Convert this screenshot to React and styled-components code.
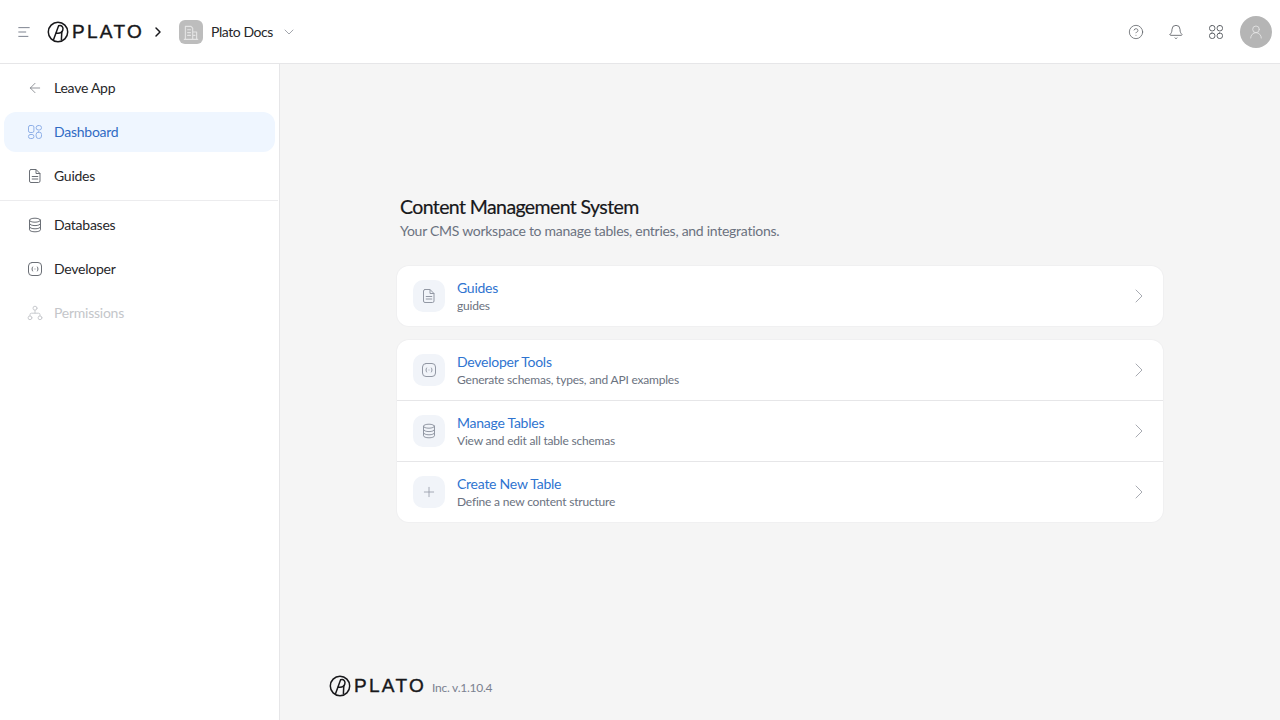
import React from "react";
import styled, { createGlobalStyle } from "styled-components";
import { ChevronDown, ChevronRight, ArrowLeft, CircleHelp, Bell, Plus, UserRound } from "lucide-react";

const GlobalStyle = createGlobalStyle`
  html, body {
    margin: 0;
    padding: 0;
    height: 100%;
    overflow: hidden;
    font-family: Lato, "Liberation Sans", sans-serif;
    letter-spacing: -0.25px;
    background: #f5f5f5;
  }
  * {
    box-sizing: border-box;
  }
`;

const Page = styled.div`
  display: flex;
  flex-direction: column;
  width: 1280px;
  height: 720px;
`;
const Header = styled.header`
  display: flex;
  align-items: center;
  flex: 0 0 64px;
  padding: 0 4px 0 17px;
  background: #ffffff;
  border-bottom: 1px solid #e6e6e8;
`;
const MenuButton = styled.span`
  display: flex;
  width: 16px;
  margin-right: 14px;
  color: #6b7280;
`;
const Caret = styled.span`
  display: flex;
  margin: 0 13px 0 6px;
  color: #18181b;
`;
const WorkspaceIcon = styled.span`
  display: flex;
  align-items: center;
  justify-content: center;
  width: 24px;
  height: 24px;
  border-radius: 6px;
  background: #bdbdbd;
  color: #e4e4e4;
`;
const WorkspaceName = styled.span`
  margin: 0 8px 0 8px;
  font-size: 14px;
  letter-spacing: -0.45px;
  color: #27272a;
`;
const DownIcon = styled.span`
  display: flex;
  color: #8b8f98;
`;
const HeaderRight = styled.div`
  display: flex;
  align-items: center;
  gap: 8px;
  margin-left: auto;
  margin-right: 4px;
`;
const HeaderButton = styled.span`
  display: flex;
  align-items: center;
  justify-content: center;
  width: 32px;
  height: 32px;
  color: #5f6368;
`;
const Avatar = styled.span`
  display: flex;
  align-items: center;
  justify-content: center;
  width: 32px;
  height: 32px;
  border-radius: 50%;
  background: #b5b5b5;
  color: #e8e8e8;
`;
const Body = styled.div`
  display: flex;
  flex: 1;
  min-height: 0;
`;
const Sidebar = styled.nav`
  display: flex;
  flex-direction: column;
  flex: 0 0 280px;
  padding: 4px 4px 0 4px;
  background: #ffffff;
  border-right: 1px solid #e6e6e8;
`;
const NavGroup = styled.div`
  display: flex;
  flex-direction: column;
  gap: 4px;
`;
const NavDivider = styled.div`
  height: 1px;
  margin: 4px -3px 4px -4px;
  background: #ececee;
`;
const NavItem = styled.a`
  display: flex;
  align-items: center;
  gap: 11px;
  height: 40px;
  padding-left: 23px;
  border-radius: 12px;
  font-size: 14px;
  color: ${props => (props.$active ? "#2f6bc4" : props.$disabled ? "#c4c6ca" : "#27272a")};
  background: ${props => (props.$active ? "#eff6ff" : "transparent")};
  svg {
    color: ${props => (props.$active ? "#8fb0e8" : props.$disabled ? "#c9cbcf" : "#6b6f76")};
  }
`;
const NavLabel = styled.span`
  padding-bottom: 2px;
`;
const Main = styled.main`
  display: flex;
  flex-direction: column;
  flex: 1;
  padding-top: 129px;
  background: #f5f5f5;
`;
const Content = styled.div`
  display: flex;
  flex-direction: column;
  width: 766px;
  margin: 0 auto;
`;
const Title = styled.h1`
  margin: 0 0 0 3px;
  font-size: 19.5px;
  font-weight: 400;
  line-height: 28px;
  letter-spacing: -0.6px;
  color: #18181b;
  -webkit-text-stroke: 0.2px #18181b;
`;
const Subtitle = styled.p`
  margin: 0 0 25px 3px;
  font-size: 14px;
  line-height: 20px;
  letter-spacing: -0.27px;
  color: #6b7280;
`;
const Card = styled.section`
  display: flex;
  flex-direction: column;
  margin-bottom: 14px;
  border-radius: 12px;
  background: #ffffff;
  box-shadow: 0 0 0 1px #f0f0f1;
`;
const Row = styled.a`
  display: flex;
  align-items: center;
  gap: 12px;
  height: 61px;
  padding: 0 16px;
  border-top: 1px solid #e6e6e8;
  &:first-child {
    height: 60px;
    border-top: none;
  }
`;
const RowIcon = styled.span`
  display: flex;
  align-items: center;
  justify-content: center;
  flex: 0 0 32px;
  height: 32px;
  border-radius: 10px;
  background: #f1f4f9;
  color: #9298a4;
`;
const RowText = styled.div`
  display: flex;
  flex-direction: column;
  flex: 1;
`;
const RowTitle = styled.span`
  font-size: 14px;
  line-height: 20px;
  color: #2f74d0;
`;
const RowDesc = styled.span`
  font-size: 12px;
  line-height: 16px;
  letter-spacing: -0.2px;
  color: #6b7280;
`;
const RowArrow = styled.span`
  display: flex;
  justify-content: center;
  width: 16px;
  color: #a8abb2;
  svg {
    flex: none;
  }
`;
const Footer = styled.footer`
  display: flex;
  align-items: center;
  gap: 6px;
  margin-top: auto;
  padding: 0 0 23px 49px;
`;
const FooterText = styled.span`
  margin-top: 2px;
  font-size: 12px;
  color: #7b8190;
`;
const Brand = styled.span`
  display: flex;
  align-items: center;
  gap: 3px;
`;
const Wordmark = styled.span`
  font-family: "Liberation Sans", sans-serif;
  font-size: 19px;
  line-height: 22px;
  font-weight: 400;
  letter-spacing: 2.3px;
  color: #18181b;
  -webkit-text-stroke: 0.4px #18181b;
`;

const Icon = ({ size = 16, children, width = 1 }) => (
  <svg width={size} height={size} viewBox="0 0 16 16" fill="none" stroke="currentColor" strokeWidth={width} strokeLinecap="round" strokeLinejoin="round">
    {children}
  </svg>
);
const MenuIcon = () => (
  <Icon size={14}>
    <path d="M2 3h12M2 8h8M2 13h10.5" />
  </Icon>
);
const GridIcon = ({ size }) => (
  <Icon size={size}>
    <rect x="1.5" y="1.5" width="5.4" height="5.4" rx="2.4" />
    <rect x="9.1" y="1.5" width="5.4" height="5.4" rx="2.4" />
    <rect x="1.5" y="9.1" width="5.4" height="5.4" rx="2.4" />
    <rect x="9.1" y="9.1" width="5.4" height="5.4" rx="2.4" />
  </Icon>
);
const DashIcon = () => (
  <Icon>
    <rect x="1.5" y="1.5" width="5.4" height="7" rx="1.6" />
    <rect x="9.1" y="1.5" width="5.4" height="4.5" rx="2.2" />
    <rect x="1.5" y="10.5" width="5.4" height="4" rx="1.8" />
    <rect x="9.1" y="8" width="5.4" height="6.5" rx="2.5" />
  </Icon>
);
const DocIcon = () => (
  <Icon>
    <path d="M4 1.5h5l4 4v7.5a1.5 1.5 0 0 1-1.5 1.5h-7.5a1.5 1.5 0 0 1-1.5-1.5v-10a1.5 1.5 0 0 1 1.5-1.5z" />
    <path d="M9 1.7v3.8h3.8M5.2 8.5h5.6M5.2 11h5.6" />
  </Icon>
);
const DatabaseIcon = () => (
  <Icon>
    <ellipse cx="8" cy="3.2" rx="5.5" ry="2" />
    <path d="M2.5 3.2v9.6c0 1.1 2.5 2 5.5 2s5.5-.9 5.5-2v-9.6" />
    <path d="M2.5 6.6c0 1.1 2.5 2 5.5 2s5.5-.9 5.5-2M2.5 9.8c0 1.1 2.5 2 5.5 2s5.5-.9 5.5-2" />
  </Icon>
);
const CodeIcon = () => (
  <Icon>
    <rect x="1.5" y="1.5" width="13" height="13" rx="3.5" />
    <path d="M5.6 6c-.8 1.2-.8 2.8 0 4M10.4 6c.8 1.2.8 2.8 0 4" />
    <path d="M8 8h.01" />
  </Icon>
);
const OrgIcon = () => (
  <Icon>
    <circle cx="8" cy="3.2" r="2" />
    <circle cx="3" cy="12.8" r="1.9" />
    <circle cx="13" cy="12.8" r="1.9" />
    <path d="M8 5.2v3M3 10.9v-1.2a1.5 1.5 0 0 1 1.5-1.5h7a1.5 1.5 0 0 1 1.5 1.5v1.2" />
  </Icon>
);
const BuildingIcon = () => (
  <Icon size={18}>
    <path d="M3 14.5v-11.5h5l1.5 1.5v10M9.5 8h3.5v6.5M2 14.5h12M5 6h2.5M5 8.5h2.5M5 11h2.5M10.5 11h1" />
  </Icon>
);
const LogoMark = () => (
  <svg width="22" height="22" viewBox="0 0 22 22" fill="none" stroke="#18181b" strokeWidth="1.5" strokeLinecap="round">
    <circle cx="11" cy="11" r="9.7" />
    <path d="M6.6 18.4 L11.6 4.8 C14.8 3.6 16.6 6.4 15.8 9 C15 11.6 12 12.6 8.8 12" />
    <path d="M14.8 10.8 L14.4 18.6" />
  </svg>
);
const Logo = () => (
  <Brand>
    <LogoMark />
    <Wordmark>PLATO</Wordmark>
  </Brand>
);

const GUIDE_ROWS = [{ icon: <DocIcon />, title: "Guides", desc: "guides" }];
const TOOL_ROWS = [
  { icon: <CodeIcon />, title: "Developer Tools", desc: "Generate schemas, types, and API examples" },
  { icon: <DatabaseIcon />, title: "Manage Tables", desc: "View and edit all table schemas" },
  { icon: <Plus size={16} strokeWidth={1.2} />, title: "Create New Table", desc: "Define a new content structure" }
];

const Rows = ({ rows }) => (
  <Card>
    {rows.map(row => (
      <Row key={row.title}>
        <RowIcon>{row.icon}</RowIcon>
        <RowText>
          <RowTitle>{row.title}</RowTitle>
          <RowDesc>{row.desc}</RowDesc>
        </RowText>
        <RowArrow>
          <ChevronRight size={24} strokeWidth={1} />
        </RowArrow>
      </Row>
    ))}
  </Card>
);

export default function App() {
  return (
    <Page>
      <GlobalStyle />
      <Header>
        <MenuButton>
          <MenuIcon />
        </MenuButton>
        <Logo />
        <Caret>
          <ChevronRight size={16} strokeWidth={2.2} />
        </Caret>
        <WorkspaceIcon>
          <BuildingIcon />
        </WorkspaceIcon>
        <WorkspaceName>Plato Docs</WorkspaceName>
        <DownIcon>
          <ChevronDown size={16} strokeWidth={1.2} />
        </DownIcon>
        <HeaderRight>
          <HeaderButton>
            <CircleHelp size={16} strokeWidth={1.2} />
          </HeaderButton>
          <HeaderButton>
            <Bell size={16} strokeWidth={1.3} />
          </HeaderButton>
          <HeaderButton>
            <GridIcon size={16} />
          </HeaderButton>
          <Avatar>
            <UserRound size={16} strokeWidth={1.2} />
          </Avatar>
        </HeaderRight>
      </Header>
      <Body>
        <Sidebar>
          <NavGroup>
            <NavItem>
              <ArrowLeft size={16} strokeWidth={1.1} />
              <NavLabel>Leave App</NavLabel>
            </NavItem>
            <NavItem $active>
              <DashIcon />
              <NavLabel>Dashboard</NavLabel>
            </NavItem>
            <NavItem>
              <DocIcon />
              <NavLabel>Guides</NavLabel>
            </NavItem>
          </NavGroup>
          <NavDivider />
          <NavGroup>
            <NavItem>
              <DatabaseIcon />
              <NavLabel>Databases</NavLabel>
            </NavItem>
            <NavItem>
              <CodeIcon />
              <NavLabel>Developer</NavLabel>
            </NavItem>
            <NavItem $disabled>
              <OrgIcon />
              <NavLabel>Permissions</NavLabel>
            </NavItem>
          </NavGroup>
        </Sidebar>
        <Main>
          <Content>
            <Title>Content Management System</Title>
            <Subtitle>Your CMS workspace to manage tables, entries, and integrations.</Subtitle>
            <Rows rows={GUIDE_ROWS} />
            <Rows rows={TOOL_ROWS} />
          </Content>
          <Footer>
            <Logo />
            <FooterText>Inc. v.1.10.4</FooterText>
          </Footer>
        </Main>
      </Body>
    </Page>
  );
}
